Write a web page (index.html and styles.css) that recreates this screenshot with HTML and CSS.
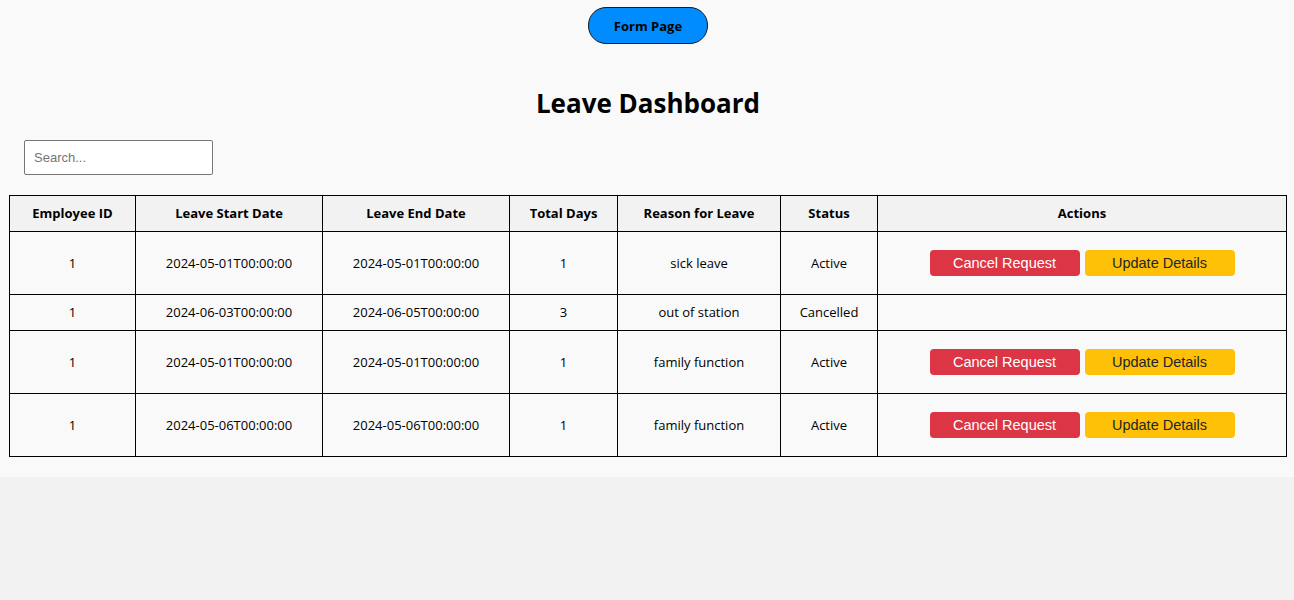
FILE: index.html
```html
<!DOCTYPE html>
<html lang="en">
<head>
<meta charset="utf-8">
<title>Leave Dashboard</title>
<link rel="stylesheet" href="styles.css">
</head>
<body>
<div class="container">
  <div class="nav">
    <button class="form-btn">Form Page</button>
  </div>
  <h1 class="title">Leave Dashboard</h1>
  <div class="search-row">
    <input class="search" type="text" placeholder="Search...">
  </div>
  <table class="leave-table">
    <colgroup>
      <col class="c-id"><col class="c-start"><col class="c-end"><col class="c-days"><col class="c-reason"><col class="c-status"><col class="c-actions">
    </colgroup>
    <thead>
      <tr>
        <th>Employee ID</th><th>Leave Start Date</th><th>Leave End Date</th><th>Total Days</th><th>Reason for Leave</th><th>Status</th><th>Actions</th>
      </tr>
    </thead>
    <tbody>
      <tr>
        <td>1</td><td>2024-05-01T00:00:00</td><td>2024-05-01T00:00:00</td><td>1</td><td>sick leave</td><td>Active</td>
        <td><div class="actions"><button class="btn cancel">Cancel Request</button><button class="btn update">Update Details</button></div></td>
      </tr>
      <tr>
        <td>1</td><td>2024-06-03T00:00:00</td><td>2024-06-05T00:00:00</td><td>3</td><td>out of station</td><td>Cancelled</td>
        <td></td>
      </tr>
      <tr>
        <td>1</td><td>2024-05-01T00:00:00</td><td>2024-05-01T00:00:00</td><td>1</td><td>family function</td><td>Active</td>
        <td><div class="actions"><button class="btn cancel">Cancel Request</button><button class="btn update">Update Details</button></div></td>
      </tr>
      <tr>
        <td>1</td><td>2024-05-06T00:00:00</td><td>2024-05-06T00:00:00</td><td>1</td><td>family function</td><td>Active</td>
        <td><div class="actions"><button class="btn cancel">Cancel Request</button><button class="btn update">Update Details</button></div></td>
      </tr>
    </tbody>
  </table>
</div>
</body>
</html>
```
FILE: styles.css
```css
html, body {
  margin: 0;
  padding: 0;
}
body {
  background: #f2f2f2;
  font-family: "Open Sans", "Noto Sans", sans-serif;
  color: #000;
}
.container {
  background: #f9f9f9;
  padding: 7px 7px 20px 9px;
  box-shadow: 0 2px 8px rgba(0, 0, 0, 0.1);
}
.nav {
  display: flex;
  justify-content: center;
}
.form-btn {
  width: 120px;
  height: 37px;
  background: #008cff;
  border: 1px solid #1a1a1a;
  border-radius: 18px;
  font-family: "Open Sans", sans-serif;
  font-weight: 700;
  font-size: 13px;
  color: #000;
  padding: 0;
}
.title {
  margin: 41px 0 0;
  text-align: center;
  font-size: 26px;
  line-height: 36px;
  font-weight: 700;
}
.search-row {
  padding: 19px 0 20px 15px;
}
.search {
  box-sizing: border-box;
  width: 189px;
  height: 35px;
  border: 1px solid #767676;
  border-radius: 2px;
  padding: 0 9px;
  font-family: "Liberation Sans", Arial, sans-serif;
  font-size: 13px;
  background: #fff;
  display: block;
}
.search::placeholder {
  color: #757575;
}
.leave-table {
  width: 100%;
  border-collapse: collapse;
  table-layout: fixed;
  font-size: 13px;
}
.c-id { width: 126px; }
.c-start { width: 187px; }
.c-end { width: 187px; }
.c-days { width: 108px; }
.c-reason { width: 163px; }
.c-status { width: 97px; }
.leave-table th,
.leave-table td {
  border: 1px solid #000;
  padding: 8px;
  text-align: center;
  line-height: 19px;
}
.leave-table th {
  background: #f2f2f2;
  font-weight: 700;
}
.leave-table td {
  background: #f9f9f9;
}
.actions {
  display: flex;
  justify-content: center;
  gap: 5px;
  padding: 10px 0;
}
.btn {
  width: 150px;
  height: 26px;
  border: none;
  border-radius: 4px;
  font-family: "Liberation Sans", Arial, sans-serif;
  font-size: 14.5px;
  padding: 0;
}
.cancel {
  background: #dc3545;
  color: #fff;
}
.update {
  background: #ffc107;
  color: #212529;
}
```
